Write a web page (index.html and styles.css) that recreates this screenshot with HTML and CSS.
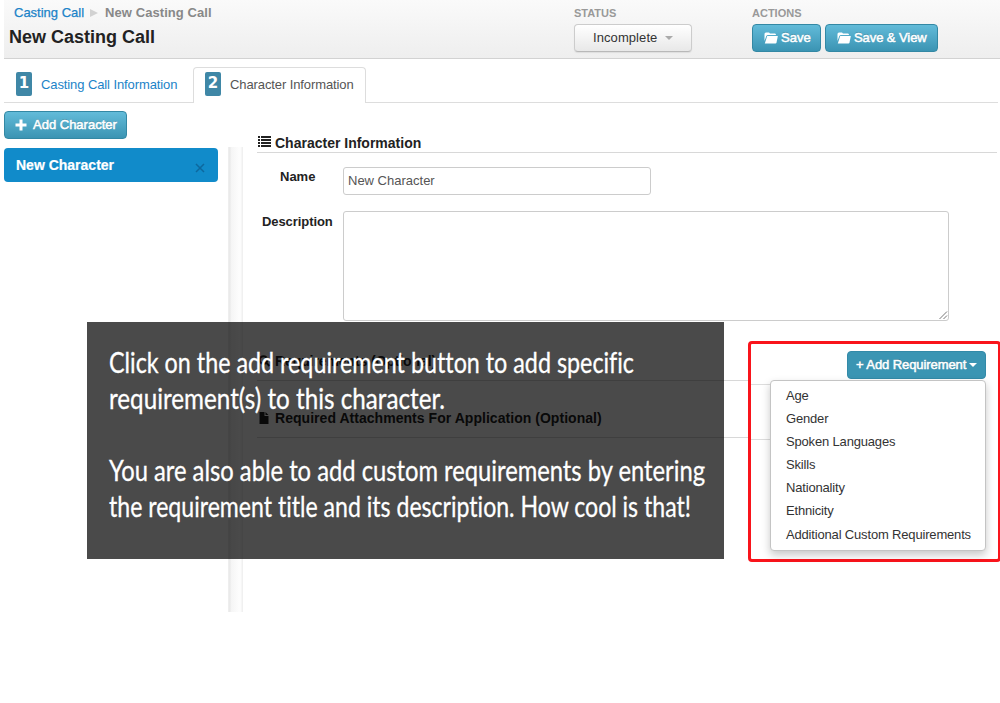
FILE: index.html
```
<!DOCTYPE html>
<html lang="en">
<head>
<meta charset="utf-8">
<title>New Casting Call</title>
<link rel="stylesheet" href="styles.css">
</head>
<body>
<div class="page">
  <header class="topbar">
    <div class="titles">
      <nav class="crumbs"><a class="crumb-link">Casting Call</a><svg class="crumb-arrow" width="8" height="8" viewBox="0 0 8 8"><path d="M0 0L8 4L0 8Z" fill="#d2d2d2"/></svg><span class="crumb-here">New Casting Call</span></nav>
      <h1 class="title">New Casting Call</h1>
    </div>
    <div class="status">
      <div class="caption">STATUS</div>
      <button class="btn btn-light"><span class="incomplete">Incomplete</span><i class="caret"></i></button>
    </div>
    <div class="actions">
      <div class="caption">ACTIONS</div>
      <div class="btn-row">
        <button class="btn btn-save"><svg width="14" height="12" viewBox="0 0 14 12"><path d="M.5 9V2Q.5.5 2 .5H5L6 1.5H11Q12 1.5 12 3H4Q2.7 3 2.2 4.3Z" fill="#fff"/><path d="M3.2 4H13.8L12.5 10.8Q12.3 11.5 11.5 11.5H.8Z" fill="#fff"/></svg><span>Save</span></button>
        <button class="btn btn-view"><svg width="14" height="12" viewBox="0 0 14 12"><path d="M.5 9V2Q.5.5 2 .5H5L6 1.5H11Q12 1.5 12 3H4Q2.7 3 2.2 4.3Z" fill="#fff"/><path d="M3.2 4H13.8L12.5 10.8Q12.3 11.5 11.5 11.5H.8Z" fill="#fff"/></svg><span class="view-text">Save &amp; View</span></button>
      </div>
    </div>
  </header>

  <nav class="tabs">
    <a class="tab tab-one"><b class="num">1</b><span>Casting Call Information</span></a>
    <a class="tab tab-active"><b class="num">2</b><span>Character Information</span></a>
  </nav>

  <div class="body">
    <aside class="side">
      <button class="btn btn-char"><svg width="12" height="12" viewBox="0 0 12 12"><path d="M4.5.5h3v4h4v3h-4v4h-3v-4h-4v-3h4z" fill="#fff"/></svg><span>Add Character</span></button>
      <div class="char-item"><span class="char-name">New Character</span><svg class="remove" width="10" height="10" viewBox="0 0 10 10"><path d="M1 1L9 9M9 1L1 9" stroke="#0d689e" stroke-width="1.5"/></svg></div>
    </aside>
    <div class="divider"></div>
    <main class="main">
      <h2 class="section section-info"><svg width="13" height="11" viewBox="0 0 13 11"><path d="M0 0h2v2H0zM3 0h10v2H3zM0 3h2v2H0zM3 3h10v2H3zM0 6h2v2H0zM3 6h10v2H3zM0 9h2v2H0zM3 9h10v2H3z" fill="#222"/></svg><span>Character Information</span></h2>
      <div class="field field-name"><label class="label name-label">Name</label><div class="input">New Character</div></div>
      <div class="field field-desc"><label class="label desc-label">Description</label><div class="area"><svg width="9" height="9" viewBox="0 0 9 9"><path d="M.5 8L8 .5M4.5 8L8 4.5" stroke="#777" stroke-width="1"/></svg></div></div>
      <h2 class="section section-req"><svg width="12" height="12" viewBox="0 0 12 12"><circle cx="5" cy="5" r="3.8" fill="none" stroke="#222" stroke-width="2"/><path d="M8 8l3 3" stroke="#222" stroke-width="2"/></svg><span class="req-text">Requirements (Optional)</span></h2>
      <h2 class="section section-att"><svg width="12" height="12" viewBox="0 0 12 12"><path d="M1 0h5v4h4v8H1zM7 0l3 3H7z" fill="#222"/></svg><span class="att-text">Required Attachments For Application (Optional)</span></h2>
    </main>
  </div>

  <section class="callout">
    <div class="rule rule-a"></div>
    <div class="rule rule-b"></div>
    <div class="hidden-btn"></div>
    <button class="btn btn-req"><span>+ Add Requirement</span><i class="caret caret-white"></i></button>
    <ul class="menu">
      <li>Age</li>
      <li>Gender</li>
      <li>Spoken Languages</li>
      <li>Skills</li>
      <li>Nationality</li>
      <li>Ethnicity</li>
      <li>Additional Custom Requirements</li>
    </ul>
  </section>

  <section class="note">
    <svg class="note-text" width="636" height="237" viewBox="0 0 636 237">
      <text x="22" y="51" textLength="525" lengthAdjust="spacingAndGlyphs">Click on the add requirement button to add specific</text>
      <text x="22" y="87" textLength="336" lengthAdjust="spacingAndGlyphs">requirement(s) to this character.</text>
      <text x="22" y="159" textLength="596" lengthAdjust="spacingAndGlyphs">You are also able to add custom requirements by entering</text>
      <text x="22" y="195" textLength="582" lengthAdjust="spacingAndGlyphs">the requirement title and its description. How cool is that!</text>
    </svg>
  </section>
</div>
</body>
</html>
```
FILE: styles.css
```
* { box-sizing: border-box; }
body { margin: 0; background: #fff; font: 13px/18px "Liberation Sans", Arial, sans-serif; color: #333; }
h1, h2, ul { margin: 0; padding: 0; }
.page { position: relative; width: 1000px; height: 703px; overflow: hidden; }
.page span { white-space: nowrap; }

.topbar { display: flex; height: 59px; margin-left: 4px; background: linear-gradient(#fafafa, #eee); border-bottom: 1px solid #d2d2d2; }
.titles { width: 570px; padding: 4px 0 0 5px; }
.crumbs { display: flex; align-items: center; height: 18px; padding-left: 5px; -webkit-text-stroke: .25px; }
.crumb-link { color: #1b83c8; }
.crumb-arrow { margin: 0 7px 0 6px; }
.crumb-here { color: #888; font-weight: bold; font-size: 13px; letter-spacing: .07px; -webkit-text-stroke: 0; }
.title { font-size: 18px; line-height: 30px; color: #222; white-space: nowrap; }
.status { width: 178px; padding-top: 5px; }
.actions { padding-top: 5px; }
.caption { height: 19px; font-size: 11px; line-height: 17px; font-weight: bold; color: #999; }
.btn { display: flex; align-items: center; height: 28px; margin: 0; padding: 0 0 1px; border: 1px solid #3388a4; border-radius: 4px; background: linear-gradient(#62bbd9, #3b94b3); color: #fff; font: 13px "Liberation Sans", Arial, sans-serif; -webkit-text-stroke: .5px; text-shadow: 0 -1px 0 rgba(0,0,0,.2); }
.btn-light { width: 118px; padding-left: 18px; border-color: #ccc; border-bottom-color: #b8b8b8; background: linear-gradient(#fff, #e8e8e8); color: #333; text-shadow: none; -webkit-text-stroke: 0; box-shadow: 0 1px 1px #ddd; }
.incomplete { letter-spacing: .08px; }
.btn-row { display: flex; gap: 4px; }
.btn-save { width: 69px; padding-left: 11px; gap: 3px; }
.btn-view { width: 113px; padding-left: 11px; gap: 3px; }
.view-text { letter-spacing: -.08px; }
.caret { width: 0; height: 0; border: 4px solid transparent; border-bottom: 0; border-top-color: #aaa; margin-left: 8px; }
.caret-white { border-top-color: #fff; margin-left: 3px; }

.tabs { display: flex; align-items: flex-end; height: 44px; margin: 0 2px 0 4px; border-bottom: 1px solid #ddd; letter-spacing: -.1px; }
.tab { display: flex; align-items: center; height: 36px; gap: 9px; }
.tab span { margin-top: 1px; }
.tab-one { width: 189px; padding: 0 0 0 12px; color: #1b83c8; }
.tab-active { width: 173px; height: 36px; padding: 0 0 3px 11px; margin-bottom: -1px; background: #fff; border: 1px solid #ddd; border-bottom: 0; border-radius: 4px 4px 0 0; color: #555; }
.num { width: 16px; height: 24px; border-radius: 2px; background: #3f87a6; color: #fff; font: bold 15px/23px "DejaVu Sans", sans-serif; text-align: center; }

.body { display: flex; height: 509px; padding-left: 4px; }
.side { width: 224px; padding-top: 8px; }
.btn-char { width: 123px; padding-left: 10px; gap: 6px; }
.char-item { display: flex; align-items: center; justify-content: space-between; width: 214px; height: 34px; margin-top: 9px; padding: 0 13px 0 12px; border-radius: 4px; background: #118bca; color: #fff; font-size: 14px; font-weight: bold; }
.char-name { -webkit-text-stroke: .2px; }
.remove { margin-top: 5px; }
.divider { width: 15px; margin-top: 44px; background: linear-gradient(90deg, #f0f0f0 0, #e8e8e8 2px, #f5f5f5 3px, #fdfdfd 11px, #fcfcfc 13px, #f0f0f0 14px); }
.main { width: 740px; margin-left: 14px; }
.section { display: flex; align-items: center; gap: 4px; border-bottom: 1px solid #d8d8d8; color: #222; font-size: 14px; line-height: 18px; }
.section svg { flex: none; width: 13px; }
.section-info { height: 50px; padding: 30px 0 0 1px; }
.section-info svg { margin-bottom: 2px; }
.field { display: flex; }
.label { width: 86px; color: #222; font-weight: bold; font-size: 13px; line-height: 18px; white-space: nowrap; }
.field-name { margin-top: 14px; }
.name-label { padding: 1px 0 0 23px; }
.input { width: 308px; height: 28px; padding-left: 4px; line-height: 26px; border: 1px solid #ccc; border-radius: 3px; color: #555; }
.field-desc { margin-top: 16px; }
.desc-label { padding: 2px 0 0 5px; letter-spacing: -.08px; }
.area { display: flex; justify-content: flex-end; align-items: flex-end; width: 606px; height: 110px; border: 1px solid #ccc; border-radius: 3px; }
.section-req { height: 60px; padding: 20px 0 0 1px; }
.req-text { letter-spacing: -.1px; }
.section-att { height: 57px; padding: 17px 0 0 1px; }
.att-text { letter-spacing: .04px; }

.callout { position: absolute; left: 748px; top: 341px; width: 253px; height: 221px; border: 3px solid #f9141b; border-radius: 4px; background: #fff; }
.rule { position: absolute; left: 0; width: 235px; height: 1px; background: #ddd; }
.rule-a { top: 40px; }
.rule-b { top: 95px; }
.hidden-btn { position: absolute; left: 200px; top: 65px; width: 35px; height: 22px; background: #6da5b7; }
.btn-req { position: relative; width: 139px; height: 28px; margin: 7px 0 0 96px; padding-left: 8px; background: #3b95b3; border-color: #338aa8; letter-spacing: -.08px; }
.menu { position: relative; width: 216px; height: 171px; margin: 1px 0 0 19px; padding: 4px 0 0 15px; list-style: none; background: #fff; border: 1px solid #c4c4c4; border-radius: 4px; box-shadow: 0 4px 8px rgba(0,0,0,.22); color: #333; letter-spacing: -.17px; }
.menu li { height: 23.1px; line-height: 22px; white-space: nowrap; }

.note { position: absolute; left: 87px; top: 322px; width: 637px; height: 237px; background: rgba(0,0,0,.71); }
.note-text { display: block; fill: #fff; stroke: #fff; stroke-width: .3px; font: 29px "Lato", sans-serif; font-variant-ligatures: none; }
```
